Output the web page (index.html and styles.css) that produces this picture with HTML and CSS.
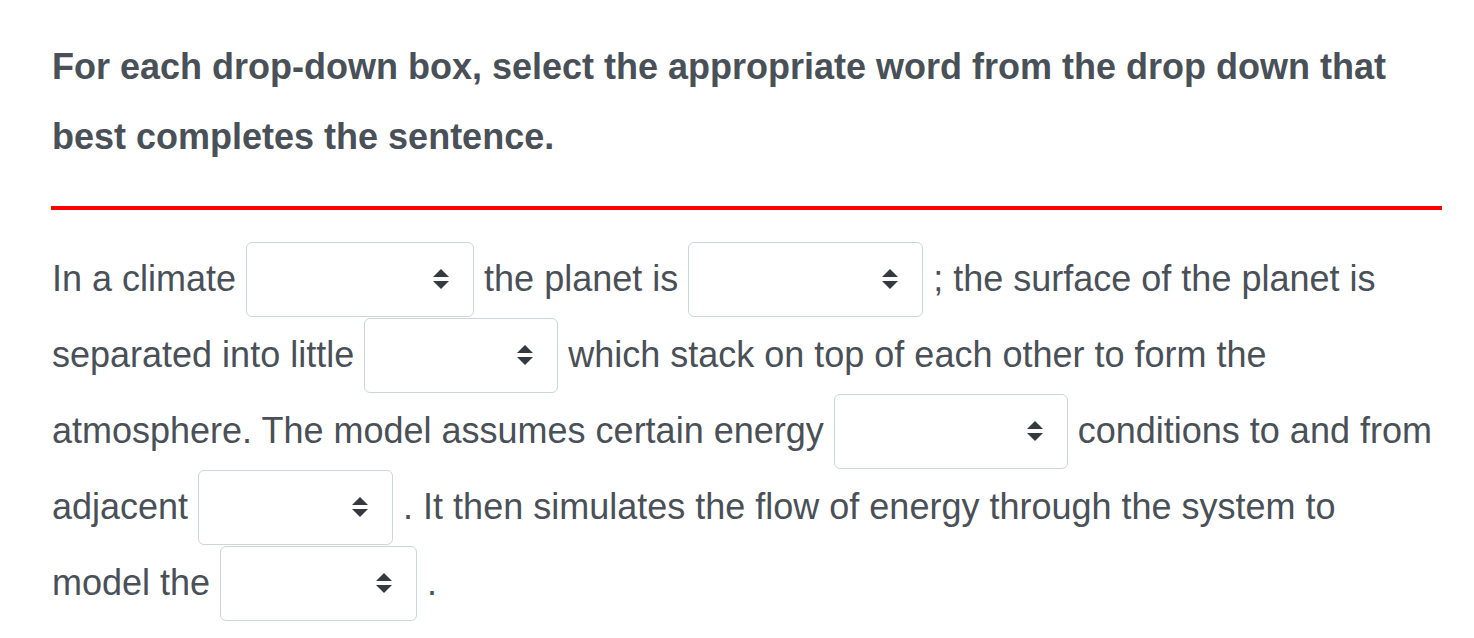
FILE: index.html
```html
<!DOCTYPE html>
<html>
<head>
<meta charset="utf-8">
<link rel="stylesheet" href="styles.css">
</head>
<body>
<div class="page">
  <h1 class="title">For each drop-down box, select the appropriate word from the drop down that best completes the sentence.</h1>
  <hr class="rule">
  <p class="question">In a climate <span class="dd w1"><svg class="arr" width="16" height="20" viewBox="0 0 16 20"><polygon points="8,0 16,8 0,8"/><polygon points="0,12 16,12 8,20"/></svg></span> the planet is <span class="dd w2"><svg class="arr" width="16" height="20" viewBox="0 0 16 20"><polygon points="8,0 16,8 0,8"/><polygon points="0,12 16,12 8,20"/></svg></span> ; the surface of the planet is separated into little <span class="dd w3"><svg class="arr" width="16" height="20" viewBox="0 0 16 20"><polygon points="8,0 16,8 0,8"/><polygon points="0,12 16,12 8,20"/></svg></span> which stack on top of each other to form the atmosphere. The model assumes certain energy <span class="dd w4"><svg class="arr" width="16" height="20" viewBox="0 0 16 20"><polygon points="8,0 16,8 0,8"/><polygon points="0,12 16,12 8,20"/></svg></span> conditions to and from adjacent <span class="dd w5"><svg class="arr" width="16" height="20" viewBox="0 0 16 20"><polygon points="8,0 16,8 0,8"/><polygon points="0,12 16,12 8,20"/></svg></span> . It then simulates the flow of energy through the system to model the <span class="dd w6"><svg class="arr" width="16" height="20" viewBox="0 0 16 20"><polygon points="8,0 16,8 0,8"/><polygon points="0,12 16,12 8,20"/></svg></span> .</p>
</div>
</body>
</html>
```
FILE: styles.css
```css
html, body {
  margin: 0;
  padding: 0;
  background: #ffffff;
}
.page {
  width: 1391px;
  padding: 32px 0 0 51px;
  font-family: "Liberation Sans", Arial, sans-serif;
  color: #495057;
}
.title {
  margin: 0;
  font-size: 36px;
  font-weight: bold;
  line-height: 70px;
  padding-left: 1px;
}
.rule {
  margin: 34px 0 0 0;
  height: 4px;
  border: 0;
  background: #ff0000;
}
.question {
  margin: 31px 0 0 0;
  padding-left: 1px;
  font-size: 36px;
  line-height: 76px;
}
.dd {
  display: inline-flex;
  box-sizing: border-box;
  height: 75px;
  margin: -6px 0 -2px 0;
  vertical-align: middle;
  border: 1.5px solid #ced4da;
  border-radius: 6px;
  align-items: center;
  justify-content: flex-end;
  padding-right: 24px;
  background: #ffffff;
}
.arr {
  display: block;
  fill: #343a40;
}
.w1 { width: 228px; }
.w2 { width: 235px; }
.w3 { width: 194px; }
.w4 { width: 234px; }
.w5 { width: 195px; }
.w6 { width: 197px; }
```
